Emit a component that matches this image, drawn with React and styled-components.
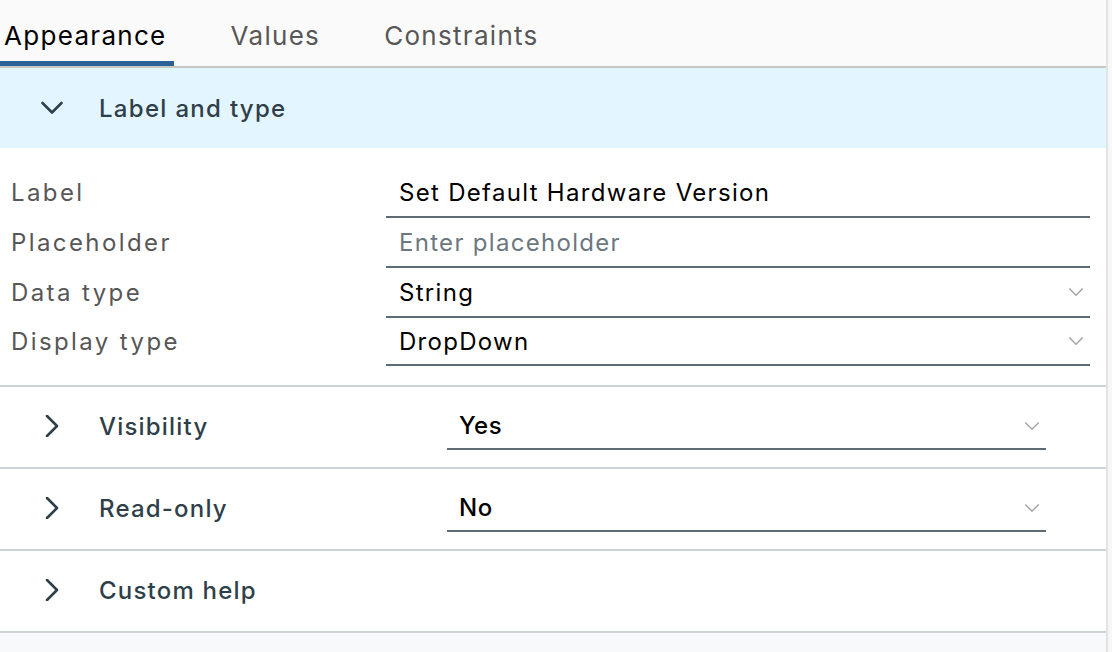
import React, { useState } from "react";
import styled, { createGlobalStyle } from "styled-components";

const GlobalStyle = createGlobalStyle`
  html, body {
    margin: 0;
    padding: 0;
    background: #f7f7f7;
  }
  body {
    font-family: Inter, "Noto Sans", sans-serif;
    -webkit-font-smoothing: antialiased;
  }
`;

const Page = styled.div`
  width: 1106px;
  min-height: 652px;
  background: #f8f9fa;
  border-right: 2px solid #e3e3e3;
`;

const TabBar = styled.div`
  display: flex;
  gap: 53px;
  height: 66px;
  background: #fafafa;
  border-bottom: 2px solid #c6c6c6;
`;

const Tab = styled.div`
  display: flex;
  align-items: center;
  padding: 4px 7px 0 4px;
  font-size: 26px;
  letter-spacing: 1.3px;
  color: ${(p) => (p.$active ? "#000" : "#575757")};
  box-shadow: ${(p) => (p.$active ? "inset 0 -5px 0 #2b6397" : "none")};
  cursor: pointer;
`;

const SectionHeader = styled.div`
  display: flex;
  align-items: center;
  height: 80px;
  background: ${(p) => (p.$open ? "#e3f5fe" : "#fff")};
  font-size: 24px;
  font-weight: 500;
  letter-spacing: 1.3px;
  color: #2f3f4a;
`;

const Caret = styled.span`
  display: flex;
  width: 99px;
  justify-content: center;
  padding-left: 4px;
  box-sizing: border-box;
`;

const Form = styled.div`
  background: #fff;
  padding: 20px 16px 19px 11px;
  border-bottom: 2px solid #cdd3d6;
`;

const FieldRow = styled.div`
  display: grid;
  grid-template-columns: 375px 1fr;
  align-items: stretch;
  height: 50px;
  &:last-child {
    height: 48px;
  }
`;

const FieldLabel = styled.div`
  display: flex;
  align-items: center;
  padding-bottom: 2px;
  font-size: 24px;
  letter-spacing: 2.4px;
  color: #575757;
`;

const Input = styled.div`
  display: flex;
  align-items: center;
  justify-content: space-between;
  padding: 0 6px 0 13px;
  border-bottom: 2px solid #5f6b73;
  font-size: 24px;
  letter-spacing: 1.3px;
  color: ${(p) => (p.$placeholder ? "#6b7880" : "#000")};
`;

const Collapsible = styled.div`
  display: flex;
  align-items: flex-start;
  height: 80px;
  background: #fff;
  border-bottom: 2px solid #cdd3d6;
`;

const RowHead = styled.div`
  display: flex;
  align-items: center;
  height: 78px;
`;

const RowTitle = styled.div`
  width: 348px;
  font-size: 24px;
  font-weight: 500;
  letter-spacing: 1.2px;
  color: #2f3f4a;
`;

const Select = styled.div`
  display: flex;
  align-items: center;
  justify-content: space-between;
  width: 599px;
  height: 53px;
  margin-top: 10px;
  padding: 6px 6px 0 12px;
  box-sizing: border-box;
  border-bottom: 2px solid #5f6b73;
  font-size: 24px;
  font-weight: 500;
  letter-spacing: 0.5px;
  color: #000;
`;

const Down = ({ color = "#a3a3a3", size = 16 }) => (
  <svg width={size} height={size * 0.6} viewBox="0 0 16 10" fill="none">
    <path d="M1 1.5 L8 8.5 L15 1.5" stroke={color} strokeWidth="1.5" />
  </svg>
);

const Chevron = ({ open }) => (
  <svg width="22" height="22" viewBox="0 0 22 22" fill="none">
    {open ? (
      <path d="M1.5 6 L11 15.5 L20.5 6" stroke="#2f3f4a" strokeWidth="2.6" strokeLinecap="round" strokeLinejoin="round" />
    ) : (
      <path d="M6 1 L16 11 L6 21" stroke="#2f3f4a" strokeWidth="2.6" strokeLinecap="round" strokeLinejoin="round" />
    )}
  </svg>
);

const fields = [
  { label: "Label", value: "Set Default Hardware Version" },
  { label: "Placeholder", value: "Enter placeholder", placeholder: true },
  { label: "Data type", value: "String", select: true },
  { label: "Display type", value: "DropDown", select: true },
];

const sections = [
  { title: "Visibility", value: "Yes" },
  { title: "Read-only", value: "No" },
  { title: "Custom help" },
];

export default function App() {
  const [tab, setTab] = useState("Appearance");
  return (
    <>
      <GlobalStyle />
      <Page>
        <TabBar>
          {["Appearance", "Values", "Constraints"].map((t) => (
            <Tab key={t} $active={t === tab} onClick={() => setTab(t)}>
              {t}
            </Tab>
          ))}
        </TabBar>
        <SectionHeader $open>
          <Caret>
            <Chevron open />
          </Caret>
          Label and type
        </SectionHeader>
        <Form>
          {fields.map((f) => (
            <FieldRow key={f.label}>
              <FieldLabel>{f.label}</FieldLabel>
              <Input $placeholder={f.placeholder}>
                {f.value}
                {f.select && <Down />}
              </Input>
            </FieldRow>
          ))}
        </Form>
        {sections.map((s) => (
          <Collapsible key={s.title}>
            <RowHead>
              <Caret>
                <Chevron />
              </Caret>
              <RowTitle>{s.title}</RowTitle>
            </RowHead>
            {s.value && (
              <Select>
                {s.value}
                <Down />
              </Select>
            )}
          </Collapsible>
        ))}
      </Page>
    </>
  );
}
